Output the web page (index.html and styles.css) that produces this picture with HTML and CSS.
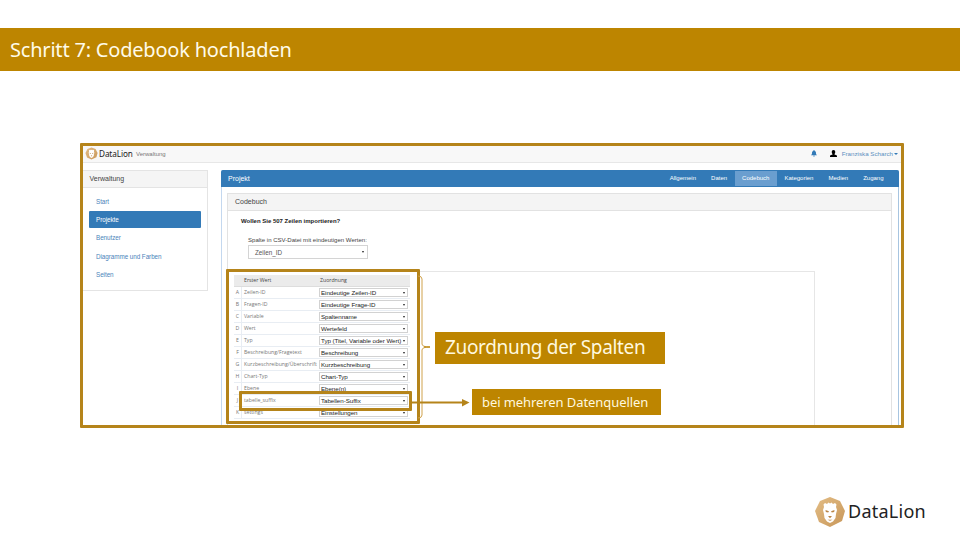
FILE: index.html
```html
<!DOCTYPE html>
<html lang="de">
<head>
<meta charset="utf-8">
<title>Schritt 7: Codebook hochladen</title>
<link rel="stylesheet" href="styles.css">
</head>
<body>
<svg class="defs" width="0" height="0" aria-hidden="true">
  <linearGradient id="gold" x1="0" y1="0" x2="1" y2="1"><stop offset="0" stop-color="#e3bd85"/><stop offset="1" stop-color="#c8975a"/></linearGradient>
  <symbol id="lion" viewBox="0 0 32 32">
    <path d="M16 1 26 5 31 15 28 25 16 31 5 26 1 15 6 5Z" fill="url(#gold)"/>
    <path d="M9.500 8.500 11 7 13 8 14.500 6.500 16 7.500 17.500 6.500 19 8 21 7 22.500 8.500 22 11 23 14 22 18 21.500 22 19 25.500 16 27 13 25.500 10.500 22 10 18 9 14 10 11Z" fill="#fff"/>
    <path d="M11.500 14l3.500 1.200-.8 1.300-2.400-.6ZM20.500 14l-3.500 1.200.8 1.300 2.400-.6ZM14 20h4l-2 2.200ZM13.500 23.800h5l-2.500 1Z" fill="#b98546"/>
  </symbol>
</svg>
<div class="slide">
  <header class="title"><span class="t-title">Schritt 7: Codebook hochladen</span></header>
  <main class="shot">
    <nav class="navbar">
      <svg class="nav-logo"><use href="#lion"/></svg>
      <span class="nav-brand">DataLion</span><span class="nav-sub">Verwaltung</span>
      <div class="user">
        <svg class="bell" viewBox="0 0 12 14"><path d="M6 0c1 0 1 1 1 1.300C9.500 2 10 4 10 6c0 2 .6 3 2 4.500H0C1.400 9 2 8 2 6c0-2 .5-4 3-4.700C5 1 5 0 6 0ZM4 11.500h4C8 13.500 4 13.500 4 11.500Z" fill="#337ab7"/></svg>
        <svg class="person" viewBox="0 0 14 14"><path d="M7 0c2.300 0 3.500 1.600 3.500 3.800C10.500 6 9.500 7 9 7.800v1L13 10.500c1 .5 1 1.500 1 3.500H0c0-2 0-3 1-3.500L5 8.800v-1C4.500 7 3.500 6 3.500 3.800 3.500 1.600 4.700 0 7 0Z" fill="#000"/></svg>
        <span class="user-name">Franziska Scharch</span><i class="caret"></i>
      </div>
    </nav>
    <div class="content">
      <aside class="sidebar">
        <div class="side-head">Verwaltung</div>
        <ul class="menu">
          <li>Start</li><li class="active">Projekte</li><li>Benutzer</li><li>Diagramme und Farben</li><li>Seiten</li>
        </ul>
      </aside>
      <section class="project">
        <div class="proj-head">
          <span class="proj-title">Projekt</span>
          <div class="tabs"><span>Allgemein</span><span>Daten</span><span class="on">Codebuch</span><span>Kategorien</span><span>Medien</span><span>Zugang</span></div>
        </div>
        <div class="codebook">
          <div class="cb-head">Codebuch</div>
          <div class="question">Wollen Sie 507 Zeilen importieren?</div>
          <label class="field-label">Spalte in CSV-Datei mit eindeutigen Werten:</label>
          <div class="field"><span>Zeilen_ID</span><i class="arrow"></i></div>
          <div class="table-box">
            <div class="table">
              <div class="row head"><b></b><span>Erster Wert</span><span>Zuordnung</span></div>
              <div class="row"><b>A</b><span>Zeilen-ID</span><div class="select">Eindeutige Zeilen-ID<i class="arrow"></i></div></div>
              <div class="row"><b>B</b><span>Fragen-ID</span><div class="select">Eindeutige Frage-ID<i class="arrow"></i></div></div>
              <div class="row"><b>C</b><span>Variable</span><div class="select">Spaltenname<i class="arrow"></i></div></div>
              <div class="row"><b>D</b><span>Wert</span><div class="select">Wertefeld<i class="arrow"></i></div></div>
              <div class="row"><b>E</b><span>Typ</span><div class="select">Typ (Titel, Variable oder Wert)<i class="arrow"></i></div></div>
              <div class="row"><b>F</b><span>Beschreibung/Fragetext</span><div class="select">Beschreibung<i class="arrow"></i></div></div>
              <div class="row"><b>G</b><span>Kurzbeschreibung/Überschrift</span><div class="select">Kurzbeschreibung<i class="arrow"></i></div></div>
              <div class="row"><b>H</b><span>Chart-Typ</span><div class="select">Chart-Typ<i class="arrow"></i></div></div>
              <div class="row"><b>I</b><span>Ebene</span><div class="select">Ebene(n)<i class="arrow"></i></div></div>
              <div class="row"><b>J</b><span>tabelle_suffix</span><div class="select">Tabellen-Suffix<i class="arrow"></i></div></div>
              <div class="row"><b>K</b><span>settings</span><div class="select">Einstellungen<i class="arrow"></i></div></div>
            </div>
          </div>
        </div>
      </section>
    </div>
  </main>
  <div class="mark mark-table"></div>
  <div class="mark mark-row"></div>
  <svg class="lines" viewBox="0 0 64 150">
    <path d="M8 4Q12 4 12 7V72Q12 75 20 75Q12 75 12 78V143Q12 146 8 146" fill="none" stroke="#d0a24c"/>
    <path d="M14 75h6" stroke="#b8860b"/>
    <path d="M2 130.500H53" stroke="#b5841a" stroke-width="1.800"/><path d="M52 127 59.500 130.500 52 134.500Z" fill="#b5841a"/>
  </svg>
  <div class="callout big"><span>Zuordnung der Spalten</span></div>
  <div class="callout small"><span>bei mehreren Datenquellen</span></div>
  <footer class="foot"><svg class="foot-logo"><use href="#lion"/></svg><span>DataLion</span></footer>
</div>
</body>
</html>
```
FILE: styles.css
```css
* { box-sizing: border-box; }
body { margin: 0; background: #fff; }
.slide { position: relative; width: 960px; height: 540px; overflow: hidden; padding-top: 28px; font-family: "Liberation Sans", Arial, sans-serif; white-space: nowrap; }
.defs { position: absolute; }
.title { height: 43px; background: #bd8500; color: #fffbe9; padding-left: 10px; font: 20px/43px "Noto Sans", sans-serif; letter-spacing: -0.2px; }
.shot { width: 824px; height: 285px; margin: 72px 0 0 80px; border: 3px solid #b5841a; background: #fff; overflow: hidden; border-radius: 1px; }

.navbar { height: 17px; display: flex; align-items: center; background: #f8f8f8; border-bottom: 1px solid #e7e7e7; padding: 0 3px 1px 2px; }
.nav-logo { width: 13px; height: 13px; margin-right: 1px; }
.nav-brand { font: 8.200px/15px "Noto Sans", sans-serif; letter-spacing: -0.1px; color: #222; width: 37px; }
.nav-sub { font-size: 6px; color: #777; }
.user { display: flex; align-items: center; margin-left: auto; font-size: 6.200px; color: #5c8fc0; }
.bell { width: 6px; height: 7px; margin-right: 13px; }
.person { width: 7px; height: 7px; margin-right: 5px; }
.caret { border: 2px solid transparent; border-top-color: #337ab7; border-bottom: 0; margin-left: 1px; }

.content { display: flex; padding-top: 7px; }
.sidebar { width: 125px; height: 121px; border: 1px solid #e4e4e4; border-left: 0; }
.side-head { height: 17px; line-height: 16px; padding-left: 6.500px; font-size: 7px; color: #444; background: #f5f5f5; border-bottom: 1px solid #e4e4e4; }
.menu { list-style: none; margin: 0; padding: 5px 6px 0; font-size: 6.300px; letter-spacing: -0.050px; color: #4a84ba; }
.menu li { height: 17px; margin-bottom: 1.200px; line-height: 17px; padding-left: 7px; border-radius: 1px; }
.menu .active { background: #337ab7; color: #fff; }

.project { width: 678px; height: 270px; margin-left: 13px; border: 1px solid #a8c5e0; border-left: 1px solid #c4d8ef; border-radius: 2px 2px 0 0; }
.proj-head { margin: -1px -1px 0; height: 17px; display: flex; align-items: center; background: #337ab7; color: #fff; border-radius: 2px 2px 0 0; padding: 0 8px 0 7px; }
.proj-title { font-size: 7px; }
.tabs { margin-left: auto; display: flex; height: 15px; line-height: 15px; font-size: 6px; }
.tabs span { padding: 0 7.500px; }
.tabs .on { background: #6a9ecf; }
.codebook { margin: 6px 6px 0 5px; height: 250px; border: 1px solid #e2e2e2; }
.cb-head { height: 17px; line-height: 16px; padding-left: 7px; font-size: 7px; color: #444; background: #f4f4f4; border-bottom: 1px solid #e2e2e2; }
.question { margin: 6px 0 0 13px; height: 10px; line-height: 9px; font-size: 6px; font-weight: bold; color: #222; }
.field-label { display: block; margin: 9px 0 0 20px; height: 9px; line-height: 9px; font-size: 6.050px; color: #444; }
.field { margin-left: 20px; width: 120px; height: 14px; border: 1px solid #d4d4d4; display: flex; align-items: center; justify-content: space-between; padding: 0 3px 0 6px; font-size: 6.300px; color: #555; }
.arrow { flex: none; border: 1.500px solid transparent; border-top: 2.500px solid #222; border-bottom: 0; }

.table-box { margin-top: 12px; width: 587px; height: 170px; border: 1px solid #e6e6e6; border-left: 0; padding: 3px 0 0 6px; }
.table { width: 176px; }
.row { display: grid; grid-template-columns: 8px 76px 92px; height: 12px; align-items: center; border-bottom: 1px solid #e8edf3; font: 5.200px/11px "Open Sans", sans-serif; color: #777; }
.row > b { font-weight: normal; text-align: center; border-right: 1px solid #e8edf3; }
.row > span { padding-left: 2px; }
.row.head { background: #ebebeb; color: #444; border-color: #ddd; }
.select { height: 9px; margin: 0 2px 0 1px; border: 1px solid #d2d2d2; background: #fff; display: flex; align-items: center; justify-content: space-between; padding: 0 2px 0 1px; font: 6.200px/8px "Liberation Sans", sans-serif; letter-spacing: -0.050px; color: #222; }

.mark { position: absolute; border: 3px solid #b5841a; border-radius: 1px; }
.mark-table { left: 226px; top: 269px; width: 194px; height: 155px; }
.mark-row { left: 239px; top: 391px; width: 173px; height: 20px; }
.lines { position: absolute; left: 410px; top: 271.500px; width: 64px; height: 150px; }
.callout { position: absolute; background: #bd8500; color: #fff8df; font-family: "Noto Sans", sans-serif; }
.big { left: 435px; top: 332px; width: 230px; height: 32px; padding-left: 10px; font-size: 19px; line-height: 31px; letter-spacing: -0.330px; }
.small { left: 472px; top: 389px; width: 189px; height: 26px; padding-left: 10px; font-size: 13px; line-height: 26px; letter-spacing: -0.080px; }
.foot { position: absolute; left: 814px; top: 495px; height: 33px; display: flex; align-items: center; font: 18px/33px "Noto Sans", sans-serif; letter-spacing: 0.250px; color: #222; }
.foot-logo { width: 32px; height: 32px; margin-right: 2px; }
```
